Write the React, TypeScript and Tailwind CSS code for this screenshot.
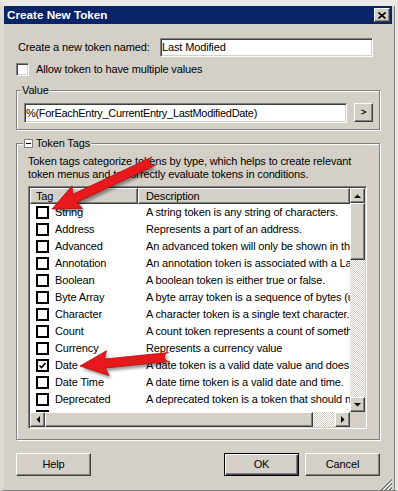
import React from "react";

const raised =
  "bg-[#d4d0c8] border border-t-white border-l-white border-r-[#404040] border-b-[#404040] shadow-[inset_-1px_-1px_0_#808080]";
const sunken =
  "bg-white border border-t-[#808080] border-l-[#808080] border-r-white border-b-white shadow-[inset_1px_1px_0_#404040,inset_-1px_-1px_0_#d4d0c8]";
const etched = "border border-[#808080] shadow-[inset_1px_1px_0_#ffffff,1px_1px_0_#ffffff]";
const checker =
  "bg-[image:repeating-conic-gradient(#d4d0c8_0_25%,#ffffff_0_50%)] bg-[length:2px_2px]";

const tags: [string, string, boolean?][] = [
  ["String", "A string token is any string of characters."],
  ["Address", "Represents a part of an address."],
  ["Advanced", "An advanced token will only be shown in the advanced menu."],
  ["Annotation", "An annotation token is associated with a Label."],
  ["Boolean", "A boolean token is either true or false."],
  ["Byte Array", "A byte array token is a sequence of bytes (used for files)."],
  ["Character", "A character token is a single text character."],
  ["Count", "A count token represents a count of something."],
  ["Currency", "Represents a currency value"],
  ["Date", "A date token is a valid date value and does not include time.", true],
  ["Date Time", "A date time token is a valid date and time."],
  ["Deprecated", "A deprecated token is a token that should not be used."],
  ["Double", "A double token is a floating point number."],
];

// red call-out arrow, tail -> tip
function arrowPath(x1: number, y1: number, x2: number, y2: number, w = 4.5, hl = 25, hw = 12.5) {
  const len = Math.hypot(x2 - x1, y2 - y1);
  const ux = (x2 - x1) / len;
  const uy = (y2 - y1) / len;
  const px = -uy;
  const py = ux;
  const bx = x2 - ux * hl;
  const by = y2 - uy * hl;
  const p = (x: number, y: number) => `${x.toFixed(1)} ${y.toFixed(1)}`;
  return [
    `M${p(x1 + px * w, y1 + py * w)}`,
    `L${p(bx + px * w, by + py * w)}`,
    `L${p(bx + px * hw - ux * 3, by + py * hw - uy * 3)}`,
    `L${p(x2, y2)}`,
    `L${p(bx - px * hw - ux * 3, by - py * hw - uy * 3)}`,
    `L${p(bx - px * w, by - py * w)}`,
    `L${p(x1 - px * w, y1 - py * w)}`,
    `A${w} ${w} 0 0 1 ${p(x1 + px * w, y1 + py * w)}Z`,
  ].join(" ");
}

const Tri = ({ dir }: { dir: "up" | "down" | "left" | "right" }) => {
  const pts = {
    up: "0,4 7,4 3.5,0.5",
    down: "0,0 7,0 3.5,3.5",
    left: "4,0 4,7 0.5,3.5",
    right: "0,0 0,7 3.5,3.5",
  }[dir];
  const vert = dir === "up" || dir === "down";
  return (
    <svg width={vert ? 7 : 4} height={vert ? 4 : 7}>
      <polygon points={pts} fill="#000" />
    </svg>
  );
};

const ScrollBtn = ({ dir, className = "" }: { dir: "up" | "down" | "left" | "right"; className?: string }) => (
  <div className={`${raised} flex items-center justify-center shrink-0 ${className}`}>
    <Tri dir={dir} />
  </div>
);

export default function App() {
  const a1 = arrowPath(154, 161, 52, 209);
  const a2 = arrowPath(169, 357, 80, 366);

  return (
    <div className="relative w-[398px] h-[491px] overflow-hidden bg-[#d4d0c8] border-t-[6px] border-t-[#ebeae7] border-l-[4px] border-l-[#dedbd5] border-r-[3px] border-r-[#e9e8e5] border-b border-b-[#808080] pr-[3px] shadow-[inset_-1px_0_0_#808080] flex flex-col font-['Liberation_Sans',Arial,sans-serif] text-[11px] tracking-[-0.14px] text-black">
      {/* title bar */}
      <div className="h-[18px] bg-[#0a246a] flex items-center justify-between pl-[3px] pr-[2px] shrink-0">
        <span className="text-white font-bold text-[11.7px] tracking-normal leading-none">Create New Token</span>
        <div className={`${raised} w-[16px] h-[14px] flex items-center justify-center`}>
          <svg width="8" height="7">
            <path d="M0.5 0.5 L7.5 6.5 M7.5 0.5 L0.5 6.5" stroke="#000" strokeWidth="1.6" />
          </svg>
        </div>
      </div>

      <div className="flex flex-col px-[12px]">
        {/* name row */}
        <div className="mt-[14px] h-[19px] flex items-center">
          <span className="w-[144px] pl-[2px]">Create a new token named:</span>
          <div className={`${sunken} w-[213px] h-[19px] flex items-center pl-[1px]`}>Last Modified</div>
        </div>

        <div className="mt-[6px] h-[13px] flex items-center">
          <div className={`${sunken} w-[13px] h-[13px]`} />
          <span className="ml-[7px]">Allow token to have multiple values</span>
        </div>

        {/* value group */}
        <div className={`${etched} relative mt-[14px] h-[40px] flex items-start pt-[12px] pl-[7px] gap-[7px]`}>
          <span className="absolute left-[4px] -top-[8px] px-[1px] bg-[#d4d0c8] leading-[14px]">Value</span>
          <div className={`${sunken} w-[323px] h-[20px] flex items-center pl-[1px] tracking-[-0.3px]`}>
            %(ForEachEntry_CurrentEntry_LastModifiedDate)
          </div>
          <div className={`${raised} w-[19px] h-[19px] flex items-center justify-center text-[9px] font-bold`}>&gt;</div>
        </div>

        {/* token tags group */}
        <div className={`${etched} relative mt-[13px] h-[297px] flex flex-col pt-[11px] pl-[11px]`}>
          <div className="absolute left-[6px] -top-[8px] px-[1px] bg-[#d4d0c8] flex items-center gap-[3px] leading-[14px]">
            <div className="w-[9px] h-[9px] border border-[#808080] bg-white flex items-center justify-center">
              <div className="w-[5px] h-[1px] bg-black" />
            </div>
            <span>Token Tags</span>
          </div>
          <p className="leading-[12.5px] whitespace-nowrap">
            Token tags categorize tokens by type, which helps to create relevant
            <br />
            token menus and to correctly evaluate tokens in conditions.
          </p>

          {/* list view */}
          <div className="mt-[6px] w-[339px] h-[243px] p-[1px] border border-t-[#808080] border-l-[#808080] border-r-white border-b-white shadow-[inset_1px_1px_0_#404040,inset_-1px_-1px_0_#d4d0c8] flex">
            <div className="w-[320px] flex flex-col">
              <div className="h-[16px] flex shrink-0">
                <div className={`${raised} w-[108px] pl-[5px] flex items-center`}>Tag</div>
                <div className={`${raised} flex-1 pl-[7px] flex items-center`}>Description</div>
              </div>
              <div className="h-[208px] bg-white overflow-hidden">
                {tags.map(([name, desc, checked]) => (
                  <div key={name} className="h-[17px] flex items-center whitespace-nowrap">
                    <div className="w-[108px] shrink-0 pl-[6px] flex items-center gap-[6px]">
                      <div className="w-[13px] h-[13px] border-2 border-black bg-white flex items-center justify-center">
                        {checked && (
                          <svg width="9" height="9">
                            <path d="M1.5 4.5 L3.5 6.5 L7.5 2" stroke="#000" strokeWidth="1.7" fill="none" />
                          </svg>
                        )}
                      </div>
                      <span>{name}</span>
                    </div>
                    <span className="pl-[8px]">{desc}</span>
                  </div>
                ))}
              </div>
              <div className="h-[15px] flex shrink-0">
                <ScrollBtn dir="left" className="w-[15px]" />
                <div className={`${raised} w-[268px]`} />
                <div className={`${checker} w-[22px]`} />
                <ScrollBtn dir="right" className="w-[15px]" />
              </div>
            </div>
            <div className="w-[15px] flex flex-col">
              <ScrollBtn dir="up" className="h-[15px]" />
              <div className={`${raised} h-[57px] shrink-0`} />
              <div className={`${checker} flex-1`} />
              <ScrollBtn dir="down" className="h-[15px]" />
              <div className="h-[15px] bg-[#d4d0c8] shrink-0" />
            </div>
          </div>
        </div>

        {/* buttons */}
        <div className="mt-[13px] h-[23px] flex justify-between">
          <button className={`${raised} w-[75px] h-[23px]`}>Help</button>
          <div className="flex gap-[6px]">
            <button className="w-[75px] h-[23px] bg-[#d4d0c8] border border-black shadow-[inset_1px_1px_0_#ffffff,inset_-1px_-1px_0_#404040,inset_-2px_-2px_0_#808080]">
              OK
            </button>
            <button className={`${raised} w-[75px] h-[23px]`}>Cancel</button>
          </div>
        </div>
      </div>

      {/* size grip */}
      <svg className="absolute right-[3px] bottom-0" width="12" height="12">
        {[0, 4, 8].map((o) => (
          <g key={o}>
            <line x1={12 - o - 1} y1="12" x2="12" y2={12 - o - 1} stroke="#ffffff" />
            <line x1={12 - o - 2} y1="12" x2="12" y2={12 - o - 2} stroke="#808080" />
            <line x1={12 - o - 3} y1="12" x2="12" y2={12 - o - 3} stroke="#808080" />
          </g>
        ))}
      </svg>

      {/* call-out arrows */}
      <svg className="absolute -left-[4px] -top-[6px] pointer-events-none" width="398" height="491">
        <defs>
          <filter id="blur" x="-20%" y="-20%" width="140%" height="140%">
            <feGaussianBlur stdDeviation="1.6" />
          </filter>
        </defs>
        {[a1, a2].map((d, i) => (
          <g key={i}>
            <path d={d} transform="translate(2 3)" fill="#000" opacity="0.4" filter="url(#blur)" />
            <path d={d} fill="#e8191c" stroke="#b30f12" strokeWidth="0.8" strokeLinejoin="round" />
          </g>
        ))}
      </svg>
    </div>
  );
}
